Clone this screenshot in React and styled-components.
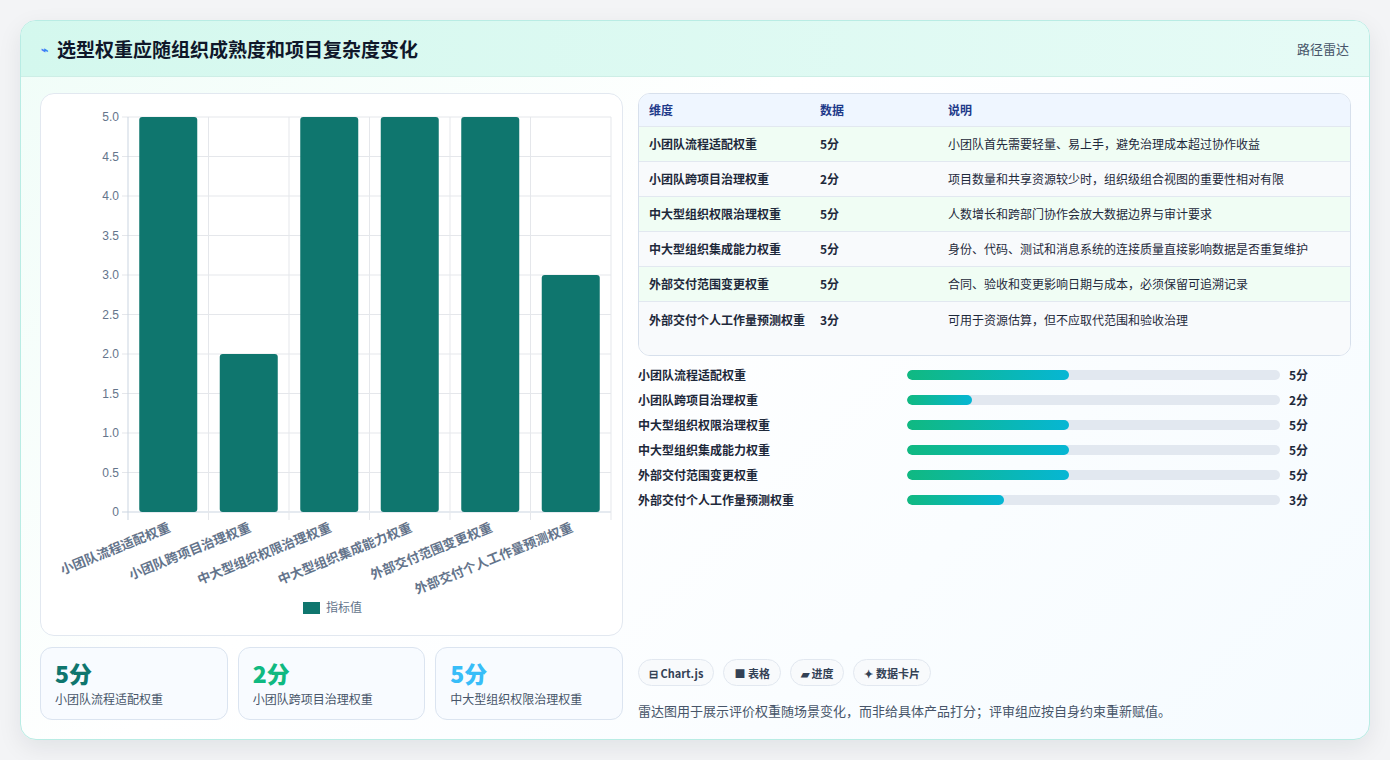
import React from "react";
import styled, { createGlobalStyle } from "styled-components";

const G = createGlobalStyle`
  html,body{margin:0;background:#f3f4f6;}
  body{font-family:"Noto Sans CJK SC","Noto Sans",sans-serif;color:#1e293b;}
`;
const Page = styled.div`padding:20px;height:760px;box-sizing:border-box;`;
const Card = styled.div`
  height:720px;box-sizing:border-box;border:1px solid #b9ece4;border-radius:16px;overflow:hidden;
  background:linear-gradient(135deg,#f0fdf8 0%,#ffffff 40%,#f5fbff 100%);
  box-shadow:0 8px 24px rgba(15,23,42,.08);display:flex;flex-direction:column;
`;
const Header = styled.div`
  height:55px;flex:none;display:flex;align-items:center;justify-content:space-between;padding:0 20px;
  background:linear-gradient(90deg,#d4f8ee,#e6fbf6);border-bottom:1px solid #cdeee6;
`;
const Title = styled.h1`margin:0;font-size:19px;font-weight:700;color:#0f172a;display:flex;align-items:center;gap:9px;`;
const Icon = styled.span`color:#3b82f6;font-size:12px;`;
const Tag = styled.span`font-size:13px;color:#475569;`;
const Body = styled.div`flex:1;display:grid;grid-template-columns:583px 1fr;gap:15px;padding:16px 18px 19px 19px;`;
const Col = styled.div`display:flex;flex-direction:column;gap:11px;min-height:0;`;
const ChartCard = styled.div`height:543px;box-sizing:border-box;background:#fff;border:1px solid #e2e8f0;border-radius:14px;`;
const Stats = styled.div`display:grid;grid-template-columns:repeat(3,1fr);gap:10px;`;
const Stat = styled.div`height:73px;box-sizing:border-box;border:1px solid #dbe4f0;border-radius:12px;background:#f8fbff;padding:10px 14px;`;
const Big = styled.div`font-size:23px;font-weight:800;color:${p=>p.c};line-height:30px;`;
const Small = styled.div`font-size:12px;color:#475569;margin-top:2px;`;
const Table = styled.div`border:1px solid #d7e0ec;border-radius:12px;overflow:hidden;background:#fff;`;
const Row = styled.div`
  display:grid;grid-template-columns:171px 128px 1fr;padding:0 10px;font-size:12px;
  min-height:${p=>p.h||35}px;box-sizing:border-box;align-items:${p=>p.top?"start":"center"};
  padding-top:${p=>p.top?"9px":"0"};line-height:18px;
  background:${p=>p.head?"#eff6ff":p.alt?"#f8fafc":"#f0fdf4"};
  color:${p=>p.head?"#1e3a8a":"#1e293b"};font-weight:${p=>p.head?600:400};
  border-bottom:${p=>p.last?"none":"1px solid #e2e8f0"};
`;
const Cell = styled.div`font-weight:${p=>p.b?600:"inherit"};padding-right:8px;`;
const Bars = styled.div`display:flex;flex-direction:column;gap:8px;margin-top:-1px;`;
const BarRow = styled.div`display:grid;grid-template-columns:269px 373px 1fr;align-items:center;height:17px;font-size:12px;`;
const BarLabel = styled.span`font-weight:600;color:#1e293b;`;
const Track = styled.div`height:10px;border-radius:5px;background:#e2e8f0;overflow:hidden;`;
const Fill = styled.div`height:100%;border-radius:5px;background:linear-gradient(90deg,#10b981,#06b6d4);`;
const Val = styled.span`font-weight:700;font-size:12px;padding-left:9px;color:#1e293b;`;
const Spacer = styled.div`flex:1;`;
const Pills = styled.div`display:flex;gap:9px;`;
const Pill = styled.span`height:27px;box-sizing:border-box;padding:0 10px;border:1px solid #e2e8f0;border-radius:14px;background:#f8fafc;font-size:11px;font-weight:700;color:#334155;display:flex;align-items:center;gap:4px;`;
const Note = styled.div`font-size:13px;color:#475569;margin-top:4px;`;

const data=[["小团队流程适配权重",5,"小团队首先需要轻量、易上手，避免治理成本超过协作收益"],["小团队跨项目治理权重",2,"项目数量和共享资源较少时，组织级组合视图的重要性相对有限"],["中大型组织权限治理权重",5,"人数增长和跨部门协作会放大数据边界与审计要求"],["中大型组织集成能力权重",5,"身份、代码、测试和消息系统的连接质量直接影响数据是否重复维护"],["外部交付范围变更权重",5,"合同、验收和变更影响日期与成本，必须保留可追溯记录"],["外部交付个人工作量预测权重",3,"可用于资源估算，但不应取代范围和验收治理"]];

function Chart(){
  const L=87,R=570,T=23,B=418,W=(R-L)/6,u=(B-T)/5;
  return <svg width="582" height="543" style={{display:"block"}}>
    {[0,1,2,3,4,5,6,7,8,9,10].map(i=>{const y=B-i*u/2;return <g key={i}>
      <line x1={L-6} x2={R} y1={y} y2={y} stroke={i?"#e5e7eb":"#cbd5e1"}/>
      <text x={L-9} y={y+4} textAnchor="end" fontSize="12" fill="#64748b" fontFamily="Liberation Sans">{i===0?"0":(i/2).toFixed(1)}</text></g>})}
    {[0,1,2,3,4,5,6].map(i=><line key={i} x1={L+i*W} x2={L+i*W} y1={T} y2={B+8} stroke={i?"#e5e7eb":"#cbd5e1"}/>)}
    {data.map((d,i)=>{const cx=L+W*i+W/2,h=d[1]*u;return <g key={i}>
      <rect x={cx-29} y={B-h} width="58" height={h} rx="3" fill="#0f766e"/>
      <text transform={`translate(${cx+3},${B+19}) rotate(-22)`} textAnchor="end" fontSize="13" fontWeight="600" fill="#64748b">{d[0]}</text></g>})}
    <rect x="262" y="508" width="17" height="12" fill="#0f766e"/>
    <text x="285" y="518" fontSize="12" fill="#64748b">指标值</text>
  </svg>;
}

export default function App(){
  return <Page><G/><Card>
    <Header><Title><Icon>⌁</Icon>选型权重应随组织成熟度和项目复杂度变化</Title><Tag>路径雷达</Tag></Header>
    <Body>
      <Col>
        <ChartCard><Chart/></ChartCard>
        <Stats>
          <Stat><Big c="#0f766e">5分</Big><Small>小团队流程适配权重</Small></Stat>
          <Stat><Big c="#10b981">2分</Big><Small>小团队跨项目治理权重</Small></Stat>
          <Stat><Big c="#38bdf8">5分</Big><Small>中大型组织权限治理权重</Small></Stat>
        </Stats>
      </Col>
      <Col>
        <Table>
          <Row head h={33}><Cell>维度</Cell><Cell>数据</Cell><Cell>说明</Cell></Row>
          {data.map((d,i)=><Row key={i} alt={i%2} last={i===5} h={i===5?53:35} top={i===5}>
            <Cell b>{d[0]}</Cell><Cell b>{d[1]}分</Cell><Cell>{d[2]}</Cell></Row>)}
        </Table>
        <Bars>{data.map((d,i)=><BarRow key={i}><BarLabel>{d[0]}</BarLabel>
          <Track><Fill style={{width:`${d[1]*8.7}%`}}/></Track><Val>{d[1]}分</Val></BarRow>)}</Bars>
        <Spacer/>
        <Pills><Pill>⊟ Chart.js</Pill><Pill>■ 表格</Pill><Pill>▰ 进度</Pill><Pill>✦ 数据卡片</Pill></Pills>
        <Note>雷达图用于展示评价权重随场景变化，而非给具体产品打分；评审组应按自身约束重新赋值。</Note>
      </Col>
    </Body>
  </Card></Page>;
}
